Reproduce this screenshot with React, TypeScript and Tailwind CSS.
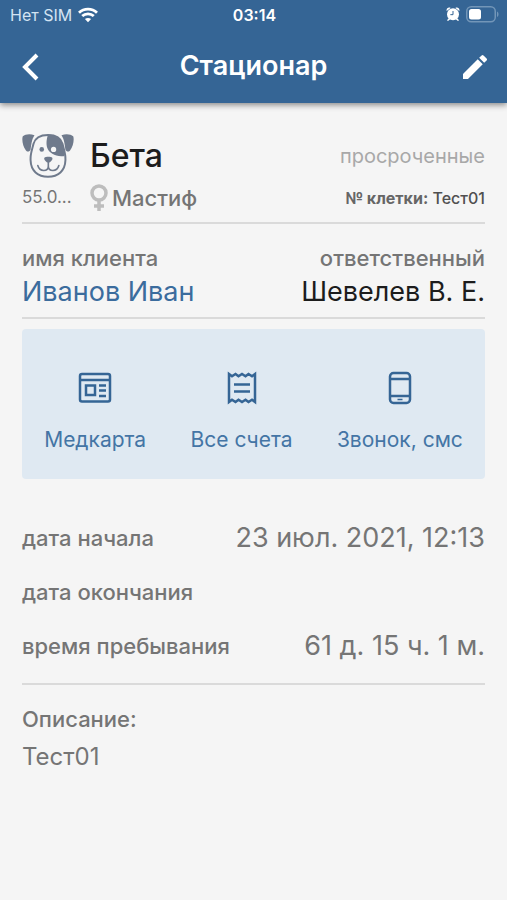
import { ReactNode } from "react";
import { MdEdit } from "react-icons/md";

const WifiIcon = () => (
  <svg className="w-5 h-4" viewBox="0 0 20 16" fill="none" stroke="currentColor" strokeWidth="2.8" aria-hidden="true">
    <path d="M1 5.7C6 .8 14 .8 19 5.7" />
    <path d="M4.2 9.1c3.3-3.1 8.3-3.1 11.6 0" />
    <path d="M10 15.2 6.9 12.1c1.8-1.6 4.4-1.6 6.2 0z" fill="currentColor" stroke="none" />
  </svg>
);

const AlarmIcon = () => (
  <svg className="w-[14px] h-[14px]" viewBox="0 0 42 42" aria-hidden="true">
    <g fill="currentColor">
      <circle cx="21" cy="22" r="18" />
      <path d="M2 12C0 4 8-1 14 3zM40 12C42 4 34-1 28 3zM8 34l-5 6 3 2 7-5zM34 34l5 6-3 2-7-5z" />
    </g>
    <path d="M21 12v11h-8" fill="none" stroke="#356595" strokeWidth="3" />
  </svg>
);

const BatteryIcon = () => (
  <svg className="w-[33px] h-[17px]" viewBox="0 0 33 17" fill="none" aria-hidden="true">
    <rect x="0.75" y="0.75" width="28.5" height="15" rx="4.5" stroke="#7396b8" strokeWidth="1.5" />
    <rect x="3" y="3" width="12" height="10.5" rx="2.5" fill="#fff" />
    <path d="M31 5.5c2 .8 2 4.7 0 5.5z" fill="#7396b8" />
  </svg>
);

const DogIcon = () => (
  <svg className="w-[52px] h-[46px] text-[#6f7a8c]" viewBox="36 36 158 138" fill="none" aria-hidden="true">
    <path d="M115 41C92 41 76 49 71 68c-4 17-10 30-9 49 1 33 22 51 53 51s52-18 53-51c1-19-5-32-9-49-5-19-21-27-44-27z" stroke="currentColor" strokeWidth="6" />
    <path d="M115 40c-6 19-6 35 0 45 8 15 27 20 48 21l3-4c0-10-4-20-7-33-5-18-18-29-44-29z" fill="currentColor" />
    <path d="M74 42C61 37 46 38 38 46c-3 12 1 30 10 42 5 6 11 4 14-2 3-18 3-30 12-44zM156 42c13-5 28-4 36 4 3 12-1 30-10 42-5 6-11 4-14-2-3-18-3-30-12-44z" fill="currentColor" />
    <circle cx="96" cy="85" r="7" fill="currentColor" />
    <circle cx="132" cy="85" r="8" fill="#f5f5f5" />
    <path d="M104 110c4-4 20-4 24 0 3 5-6 15-12 15s-15-10-12-15z" fill="currentColor" />
    <path d="M116 122v14c0 9-7 13-14 13-9 0-15-5-18-15M116 136c0 9 7 13 14 13 9 0 15-5 18-15" stroke="currentColor" strokeWidth="5" strokeLinecap="round" />
  </svg>
);

const FemaleIcon = () => (
  <svg className="w-[18px] h-7" viewBox="0 0 18 28" fill="none" stroke="#bdbdbd" strokeWidth="3.5" role="img" aria-label="самка">
    <circle cx="9" cy="9" r="7" />
    <path d="M9 16v11M4 22h10" />
  </svg>
);

const CardIcon = () => (
  <svg className="w-9 h-9" viewBox="0 0 36 36" fill="none" stroke="currentColor" strokeWidth="2.5" aria-hidden="true">
    <rect x="3" y="4" width="30" height="27.5" rx="2" />
    <path d="M3 10h30M22 15.5h7M22 20.5h7M22 26h7" />
    <rect x="9" y="15.5" width="9" height="9.5" />
  </svg>
);

const ReceiptIcon = () => (
  <svg className="w-9 h-9" viewBox="0 0 36 36" fill="none" stroke="currentColor" strokeWidth="2.5" aria-hidden="true">
    <path d="M5 4l3 2.3L11.5 4l3 2.3L18 4l3.5 2.3 3-2.3 3.5 2.3L31 4v28l-3-2.3-3.500 2.300-3-2.300L18 32l-3.500-2.300-3 2.300L8 29.700 5 32z" />
    <path d="M10 14.5h16M10 21.5h16" />
  </svg>
);

const PhoneIcon = () => (
  <svg className="w-9 h-9" viewBox="0 0 36 36" fill="none" stroke="currentColor" strokeWidth="2.5" aria-hidden="true">
    <rect x="8" y="3" width="20" height="30" rx="3.5" />
    <path d="M8 9h20M8 26h20" />
    <path d="M15.5 29.5h5" strokeWidth="1.5" />
  </svg>
);

const actions = [
  { title: "Медкарта", icon: <CardIcon /> },
  { title: "Все счета", icon: <ReceiptIcon /> },
  { title: "Звонок, смс", icon: <PhoneIcon /> },
];

const InfoRow = ({ label, children }: { label: string; children?: ReactNode }) => (
  <div className="flex h-[54px] items-center justify-between">
    <dt className="text-[22px] font-medium">{label}</dt>
    <dd className="text-[27px]">{children}</dd>
  </div>
);

const App = () => {
  return (
    <div className="min-h-screen bg-[#f5f5f5] text-[#757575] whitespace-nowrap font-['Inter','Liberation_Sans',sans-serif]">
      <header className="bg-[#356595] text-white shadow-[0_2px_6px_rgba(0,0,0,0.45)]">
        <div className="grid h-[30px] grid-cols-[1fr_auto_1fr] items-center pl-[10px] pr-2 text-base">
          <div className="flex items-center gap-1.5 text-[#d3e3f2]">
            Нет SIM
            <span className="text-white"><WifiIcon /></span>
          </div>
          <time className="font-semibold">03:14</time>
          <div className="flex items-center justify-end gap-1.5 pb-0.5">
            <AlarmIcon />
            <BatteryIcon />
          </div>
        </div>
        <div className="flex h-[73px] items-center justify-between px-4">
          <button type="button" aria-label="Назад" className="flex w-8 pl-1">
            <svg className="w-5 h-7" viewBox="0 0 20 28" fill="none" stroke="currentColor" strokeWidth="4" aria-hidden="true">
              <path d="M17 2 5 14l12 12" />
            </svg>
          </button>
          <h1 className="text-[27px] font-semibold">Стационар</h1>
          <button type="button" aria-label="Редактировать" className="flex w-8 justify-center">
            <MdEdit size={32} />
          </button>
        </div>
      </header>

      <main className="px-[22px] pt-7">
        <section className="border-b-2 border-[#dadada] pb-[7px]">
          <div className="flex h-[50px] items-center">
            <DogIcon />
            <h2 className="ml-4 text-[32px] font-medium text-[#1c1c1c]">Бета</h2>
            <span className="ml-auto text-[20px] text-[#a8a8a8]">просроченные</span>
          </div>
          <div className="flex h-[34px] items-center">
            <span className="w-[68px] text-[17px]">55.0...</span>
            <FemaleIcon />
            <span className="ml-1 text-[22px] font-medium">Мастиф</span>
            <span className="ml-auto text-base font-medium text-[#505050]">
              <b className="font-bold text-[#666]">№ клетки:</b> Тест01
            </span>
          </div>
        </section>

        <section className="flex justify-between border-b-2 border-[#dadada] pt-4 pb-[9px]">
          <div>
            <p className="text-[22px] leading-9 font-medium">имя клиента</p>
            <a href="#client" className="block text-[27px] leading-8 text-[#3b6c9d]">Иванов Иван</a>
          </div>
          <div className="text-right">
            <p className="text-[22px] leading-9 font-medium">ответственный</p>
            <p className="text-[27px] leading-8 text-[#1c1c1c]">Шевелев В. Е.</p>
          </div>
        </section>

        <nav className="mt-[10px] flex h-[150px] items-center justify-around rounded-sm bg-[#dfe9f2] text-[#356595]">
          {actions.map((a) => (
            <button type="button" key={a.title} className="flex flex-col items-center gap-[18px] pt-[18px]">
              {a.icon}
              <span className="text-[21px] leading-8 text-[#4475a5]">{a.title}</span>
            </button>
          ))}
        </nav>

        <dl className="mt-8 border-b-2 border-[#dadada] pb-[10px]">
          <InfoRow label="дата начала">23 июл. 2021, 12:13</InfoRow>
          <InfoRow label="дата окончания" />
          <InfoRow label="время пребывания">61 д. 15 ч. 1 м.</InfoRow>
        </dl>

        <section className="pt-4">
          <h3 className="text-[22px] leading-9 font-medium">Описание:</h3>
          <p className="text-2xl leading-10">Тест01</p>
        </section>
      </main>
    </div>
  );
};

export default App;
